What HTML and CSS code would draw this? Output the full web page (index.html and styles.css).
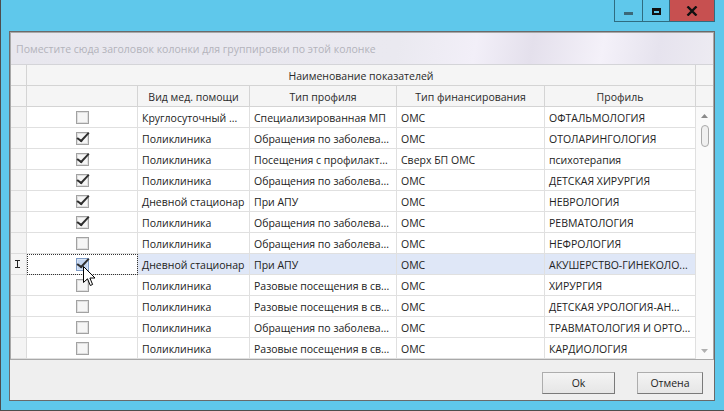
FILE: index.html
```html
<!DOCTYPE html>
<html lang="ru">
<head>
<meta charset="utf-8">
<title>Наименование показателей</title>
<link rel="stylesheet" href="styles.css">
</head>
<body>
<div class="window">
  <div class="titlebar">
    <div class="tb-btn tb-min"><span class="min-glyph"></span></div>
    <div class="tb-btn tb-max"><span class="max-glyph"></span></div>
    <div class="tb-btn tb-close">
      <svg width="12" height="10" viewBox="0 0 12 10"><path d="M1.5 0.5 L10.5 9.5 M10.5 0.5 L1.5 9.5" stroke="#111" stroke-width="2.4" fill="none"/></svg>
    </div>
  </div>
  <div class="client">
    <div class="grid">
      <div class="group-panel">Поместите сюда заголовок колонки для группировки по этой колонке</div>
      <div class="hrow band">
        <div class="c ind"></div>
        <div class="c band-title">Наименование показателей</div>
        <div class="c sc"></div>
      </div>
      <div class="hrow">
        <div class="c ind"></div>
        <div class="c"></div>
        <div class="c">Вид мед. помощи</div>
        <div class="c">Тип профиля</div>
        <div class="c">Тип финансирования</div>
        <div class="c">Профиль</div>
        <div class="c sc"></div>
      </div>
      <div class="body">
        <div class="rows">
          <div class="row"><div class="c ind"></div><div class="c chk"><span class="cb"></span></div><div class="c">Круглосуточный ...</div><div class="c">Специализированная МП</div><div class="c">ОМС</div><div class="c">ОФТАЛЬМОЛОГИЯ</div></div>
          <div class="row"><div class="c ind"></div><div class="c chk"><span class="cb on"></span></div><div class="c">Поликлиника</div><div class="c">Обращения по заболева...</div><div class="c">ОМС</div><div class="c">ОТОЛАРИНГОЛОГИЯ</div></div>
          <div class="row"><div class="c ind"></div><div class="c chk"><span class="cb on"></span></div><div class="c">Поликлиника</div><div class="c">Посещения с профилакт...</div><div class="c">Сверх БП ОМС</div><div class="c">психотерапия</div></div>
          <div class="row"><div class="c ind"></div><div class="c chk"><span class="cb on"></span></div><div class="c">Поликлиника</div><div class="c">Обращения по заболева...</div><div class="c">ОМС</div><div class="c">ДЕТСКАЯ ХИРУРГИЯ</div></div>
          <div class="row"><div class="c ind"></div><div class="c chk"><span class="cb on"></span></div><div class="c">Дневной стационар</div><div class="c">При АПУ</div><div class="c">ОМС</div><div class="c">НЕВРОЛОГИЯ</div></div>
          <div class="row"><div class="c ind"></div><div class="c chk"><span class="cb on"></span></div><div class="c">Поликлиника</div><div class="c">Обращения по заболева...</div><div class="c">ОМС</div><div class="c">РЕВМАТОЛОГИЯ</div></div>
          <div class="row"><div class="c ind"></div><div class="c chk"><span class="cb"></span></div><div class="c">Поликлиника</div><div class="c">Обращения по заболева...</div><div class="c">ОМС</div><div class="c">НЕФРОЛОГИЯ</div></div>
          <div class="row sel">
            <div class="c ind"><svg class="ibeam" width="7" height="8" viewBox="0 0 7 8"><path d="M1 0.5 H6 M3.5 0.5 V7.5 M1 7.5 H6" stroke="#222" stroke-width="1" fill="none"/></svg></div>
            <div class="c chk focus"><span class="cb on hot"></span></div>
            <div class="c">Дневной стационар</div><div class="c">При АПУ</div><div class="c">ОМС</div><div class="c">АКУШЕРСТВО-ГИНЕКОЛО...</div>
          </div>
          <div class="row"><div class="c ind"></div><div class="c chk"><span class="cb"></span></div><div class="c">Поликлиника</div><div class="c">Разовые посещения в св...</div><div class="c">ОМС</div><div class="c">ХИРУРГИЯ</div></div>
          <div class="row"><div class="c ind"></div><div class="c chk"><span class="cb"></span></div><div class="c">Поликлиника</div><div class="c">Разовые посещения в св...</div><div class="c">ОМС</div><div class="c">ДЕТСКАЯ УРОЛОГИЯ-АН...</div></div>
          <div class="row"><div class="c ind"></div><div class="c chk"><span class="cb"></span></div><div class="c">Поликлиника</div><div class="c">Обращения по заболева...</div><div class="c">ОМС</div><div class="c">ТРАВМАТОЛОГИЯ И ОРТО...</div></div>
          <div class="row"><div class="c ind"></div><div class="c chk"><span class="cb"></span></div><div class="c">Поликлиника</div><div class="c">Разовые посещения в св...</div><div class="c">ОМС</div><div class="c">КАРДИОЛОГИЯ</div></div>
        </div>
        <div class="vscroll">
          <svg class="arr" width="7" height="4" viewBox="0 0 7 4"><path d="M0 4 L3.5 0 L7 4 Z" fill="#8a8a8a"/></svg>
          <div class="thumb"></div>
          <div class="track"></div>
          <svg class="arr" width="7" height="4" viewBox="0 0 7 4"><path d="M0 0 L3.5 4 L7 0 Z" fill="#b0b0b0"/></svg>
        </div>
      </div>
      <svg class="cursor" width="13" height="21" viewBox="0 0 13 21"><path d="M0.5 0.5 V16.5 L4.5 12.8 L7.3 19.5 L9.6 18.5 L6.9 12 H12 Z" fill="#fff" stroke="#000" stroke-width="1" stroke-linejoin="miter"/></svg>
    </div>
    <div class="footer">
      <div class="btn btn-ok">Ok</div>
      <div class="btn btn-cancel">Отмена</div>
    </div>
  </div>
</div>
</body>
</html>
```

FILE: styles.css
```css
html, body {
  margin: 0;
  padding: 0;
}
body {
  width: 724px;
  height: 411px;
  overflow: hidden;
  font-family: "Open Sans", "Liberation Sans", sans-serif;
  font-size: 10.5px;
  color: #222;
}
.window {
  width: 724px;
  height: 411px;
  box-sizing: border-box;
  background: #5fc8eb;
  border-left: 1px solid #4d4d4d;
  border-bottom: 1px solid #4d4d4d;
  padding: 0 9px 9px 8px;
  display: flex;
  flex-direction: column;
}
.titlebar {
  height: 31px;
  flex: none;
  display: flex;
  justify-content: flex-end;
  align-items: flex-start;
}
.tb-btn {
  height: 22px;
  box-sizing: border-box;
  display: flex;
  align-items: center;
  justify-content: center;
  border: 1px solid #2f6c80;
  border-top: none;
}
.tb-min { width: 28px; background: #5fc8eb; border-right: none; }
.tb-max { width: 27px; background: #5fc8eb; border-right: none; }
.tb-close { width: 46px; background: #c75050; border-color: #2f6c80; }
.min-glyph {
  display: block;
  width: 9px;
  height: 3px;
  background: #3b6878;
  margin-top: 6px;
}
.max-glyph {
  display: block;
  width: 9px;
  height: 7px;
  box-sizing: border-box;
  border: 2px solid #111;
  border-top-width: 3px;
  margin-top: 1px;
}
.client {
  flex: 1;
  border: 1px solid #6a6a6a;
  background: #efefef;
  display: flex;
  flex-direction: column;
}
.grid {
  position: relative;
  border: 1px solid #a8a8a8;
  background: #fff;
  display: flex;
  flex-direction: column;
}
.group-panel {
  height: 31px;
  border-bottom: 1px solid #d4d4d8;
  background: linear-gradient(100deg, #e8e7ee 0%, #eae9f0 55%, #f2eff8 66%, #e4e0ec 74%, #f4f1f9 84%, #e6e3ee 92%, #edebf2 100%);
  color: #b3b3bb;
  padding-left: 5px;
  display: flex;
  align-items: center;
  white-space: nowrap;
}
.hrow, .row {
  display: grid;
  grid-template-columns: 16px 111px 112px 147px 148px 151px;
  height: 21px;
}
.hrow {
  grid-template-columns: 16px 111px 112px 147px 148px 151px 17px;
  background: #f5f5f5;
}
.band {
  grid-template-columns: 16px 669px 17px;
}
.c {
  box-sizing: border-box;
  border-right: 1px solid #dadada;
  border-bottom: 1px solid #dadada;
  white-space: nowrap;
  overflow: hidden;
  display: flex;
  align-items: center;
  padding: 1px 4px 0;
}
.hrow .c {
  justify-content: center;
  color: #2a2a2a;
  border-color: #d4d4d4;
}
.hrow .c.sc { border-right: none; }
.ind {
  background: #f4f4f4;
  padding: 0;
}
.hrow .ind { background: #f5f5f5; }
.row .c { border-color: #e0e0e0; }
.row .ind { border-color: #dcdcdc; }
.body {
  display: flex;
}
.rows {
  flex: none;
}
.chk {
  justify-content: center;
  padding: 0;
}
.cb {
  display: block;
  width: 13px;
  height: 13px;
  box-sizing: border-box;
  border: 1px solid #a2a2a2;
  background: #f6f6f6;
  box-shadow: inset 0 0 0 1px #dfdfdf;
  position: relative;
}
.cb.on::after {
  content: "";
  position: absolute;
  left: 3px;
  top: -3px;
  width: 4px;
  height: 10px;
  border-right: 2px solid #2e2e2e;
  border-bottom: 2px solid #2e2e2e;
  transform: rotate(35deg) skewX(-8deg);
  transform-origin: center;
}
.cb.hot {
  background: #c3d5f0;
  border-color: #7f9cc6;
  box-shadow: inset 0 0 0 1px #d8e4f6;
}
.sel .c { background: #dfe7f7; }
.sel .ind { background: #f4f4f4; justify-content: center; }
.sel .chk { background: #fff; }
.focus {
  outline: 1px dotted #333;
  outline-offset: -1px;
}
.ibeam { display: block; margin-left: -2px; }
.vscroll {
  width: 17px;
  background: #fafafa;
  display: flex;
  flex-direction: column;
  align-items: center;
  padding: 7px 0 6px;
  box-sizing: border-box;
}
.arr { display: block; flex: none; }
.thumb {
  width: 8px;
  height: 22px;
  box-sizing: border-box;
  border: 1px solid #a9a9a9;
  border-radius: 4px;
  background: #f0f0f0;
  margin-top: 7px;
  flex: none;
}
.track { flex: 1; }
.cursor {
  position: absolute;
  left: 72px;
  top: 233px;
}
.footer {
  flex: 1;
  display: flex;
  justify-content: flex-end;
  align-items: flex-start;
  gap: 22px;
  padding: 12px 11px 0 0;
}
.btn {
  height: 22px;
  box-sizing: border-box;
  border: 1px solid #adadad;
  border-right-color: #7a7a7a;
  border-bottom-color: #7a7a7a;
  background: linear-gradient(#f4f4f4, #e6e6e6);
  display: flex;
  align-items: center;
  justify-content: center;
  color: #1e1e1e;
}
.btn-ok { width: 73px; }
.btn-cancel { width: 66px; }
```
